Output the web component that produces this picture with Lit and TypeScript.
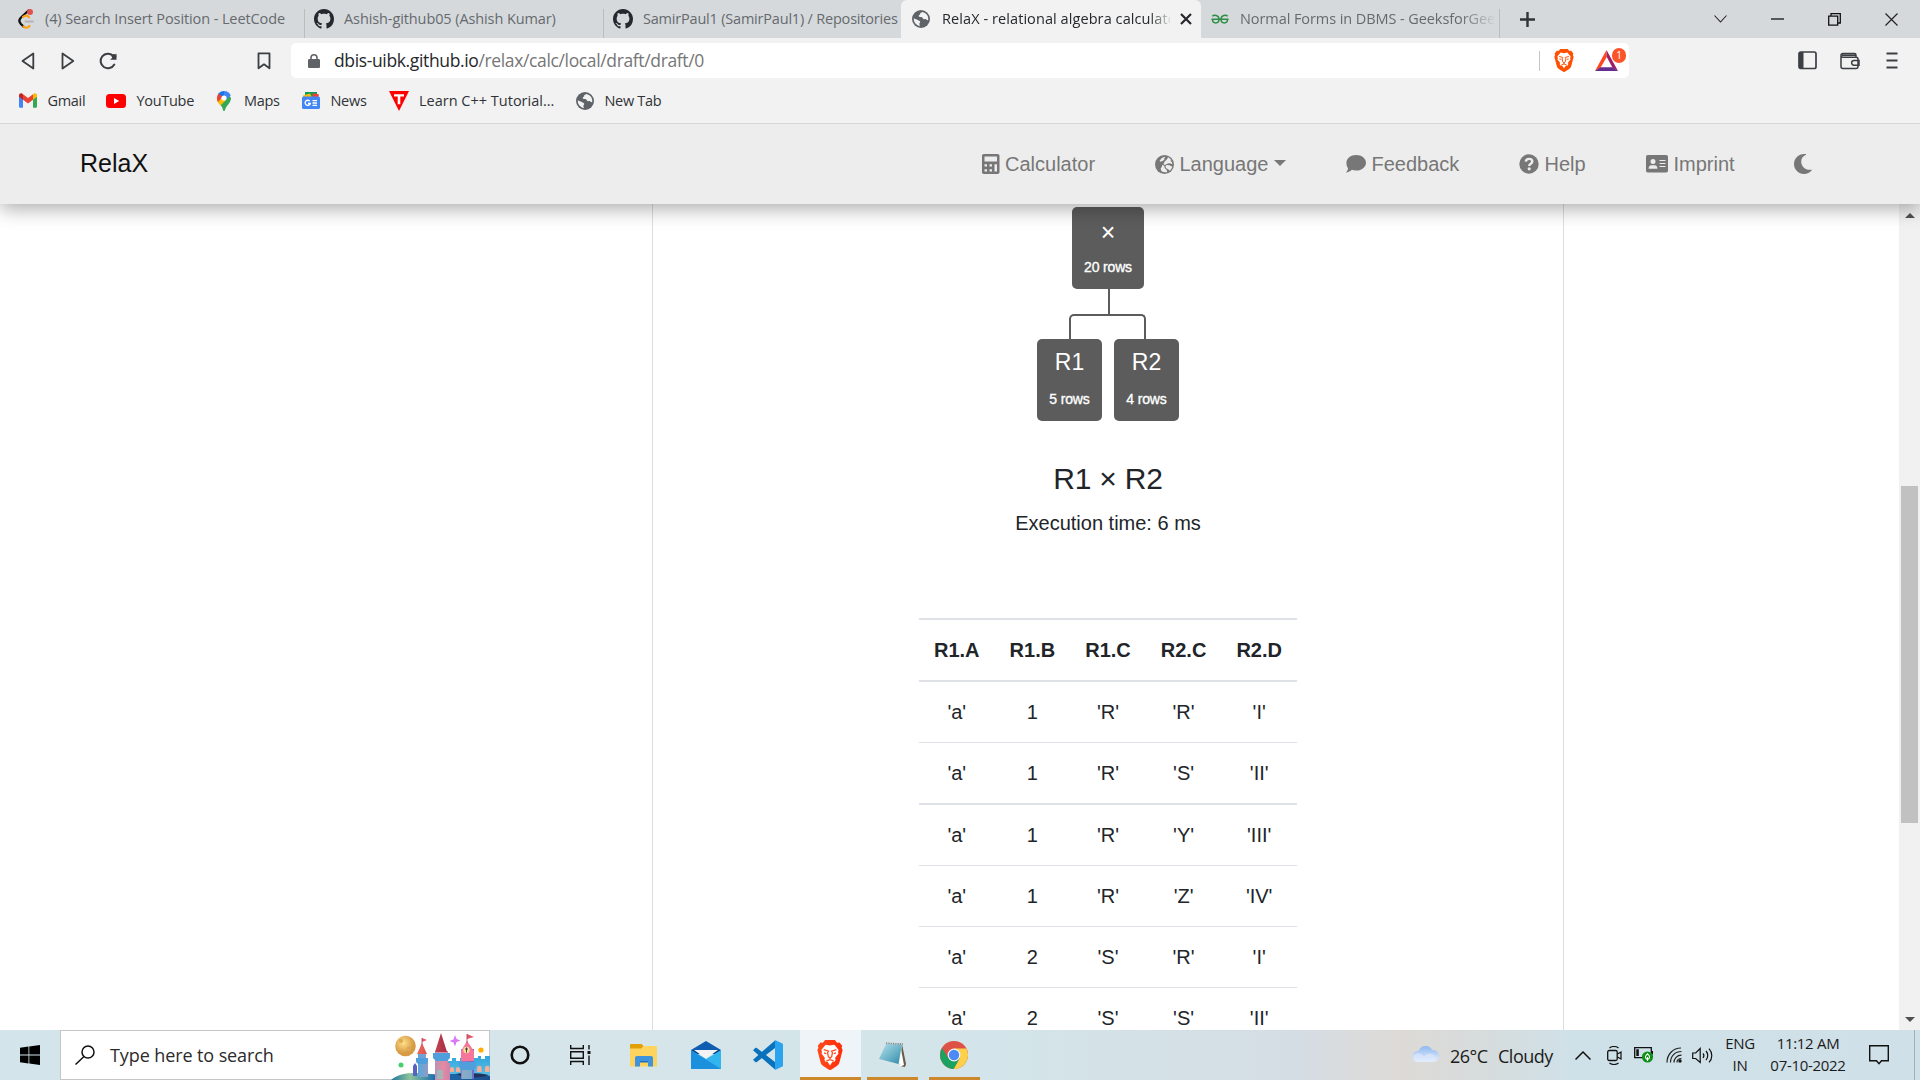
import { LitElement, html, svg, css } from "lit";
import { customElement } from "lit/decorators.js";

const icon = (w: number, h: number, box: string, body: unknown) =>
  html`<svg class="ic" width=${w} height=${h} viewBox=${box} fill="none">${body}</svg>`;

/* ---------- icon shapes ---------- */
const github = svg`<path fill="#24292f" fill-rule="evenodd" d="M8 0C3.58 0 0 3.58 0 8c0 3.54 2.29 6.53 5.47 7.59.4.07.55-.17.55-.38 0-.19-.01-.82-.01-1.49-2.01.37-2.53-.49-2.69-.94-.09-.23-.48-.94-.82-1.13-.28-.15-.68-.52-.01-.53.63-.01 1.08.58 1.23.82.72 1.21 1.87.87 2.33.66.07-.52.28-.87.51-1.07-1.78-.2-3.64-.89-3.64-3.95 0-.87.31-1.59.82-2.15-.08-.2-.36-1.02.08-2.12 0 0 .67-.21 2.2.82.64-.18 1.32-.27 2-.27s1.36.09 2 .27c1.53-1.04 2.2-.82 2.2-.82.44 1.1.16 1.92.08 2.12.51.56.82 1.27.82 2.15 0 3.07-1.87 3.75-3.65 3.95.29.25.54.73.54 1.48 0 1.07-.01 1.93-.01 2.2 0 .21.15.46.55.38A8.01 8.01 0 0 0 16 8c0-4.42-3.58-8-8-8z"/>`;
const globe = svg`<circle cx="9" cy="9" r="9" fill="#5f6368"/><path fill="#f2f2f2" d="M10.4 1.900c-.9.7-2.400.5-2.200 1.900.2 1.200-1.400 1-1.500 2-.1 1 1.200 1.300 2.500 1.200 1.500 0 1.200 1.300 2.200 1.900 1.100.6 1.800-.2 2.600.3 1 .7 1.500 1.200 2.300.9A7.300 7.300 0 0 0 10.400 1.900zM1.800 8.200c1.200 1 2.900.9 3.900 1.700 1 .8 2.300.7 2.500 1.900.1 1-.9 1.200-.8 2.200 0 .9.600 1.500.3 2.200A7.300 7.300 0 0 1 1.800 8.200z"/>`;
const leet = svg`<path d="M11.500 1.500 4 8.500c-1.800 1.800-2 4.300-.3 6.200l3 3" stroke="#111" stroke-width="2.300" stroke-linecap="round"/><path d="M6 8c2-1.800 4-1.800 6 .3M6.500 17.500c1.800 1.800 4.300 1.500 6-.5" stroke="#ffa116" stroke-width="2.200" stroke-linecap="round"/><path d="M8.500 12.500H16" stroke="#b3b3b3" stroke-width="2" stroke-linecap="round"/><circle cx="13" cy="3" r="3" fill="#e0524d"/>`;
const gfg = svg`<g stroke="#2f8d46" stroke-width="1.500"><path d="M1.300 2.300C3 .5 8 .8 8 5.300M.5 5.300H17.500M16.700 2.300C15 .5 10 .8 10 5.300"/><path d="M8 5.300c0 4.800-6.500 4.800-6.500 0M10 5.300c0 4.800 6.500 4.800 6.500 0"/></g>`;
const gmail = svg`<path fill="#4285f4" d="M0 3v10.500c0 .8.500 1.200 1.200 1.200H4V6z"/><path fill="#34a853" d="M14 14.700h2.800c.7 0 1.200-.4 1.200-1.200V3l-4 3z"/><path fill="#fbbc04" d="M14 1.500v5.300l4-3V2.500C18 .6 16-.3 14.600.8z"/><path fill="#c5221f" d="M0 2.500v1.300l4 3V1.500L3.400.8C2-.3 0 .6 0 2.500z"/><path fill="#ea4335" d="M4 1.300 9 5l5-3.700v5.500l-5 3.700-5-3.700z"/>`;
const youtube = svg`<rect width="20" height="14" rx="3.500" fill="#f00"/><path fill="#fff" d="m8 4 5.200 3L8 10z"/>`;
const maps = svg`<path fill="#34a853" d="M1 11c2 3 4.500 4 5 8.200.2 1 1.800 1 2 0C8.600 15 14 12 14 7L11 3z"/><path fill="#4285f4" d="M7 0c2.800 0 5.400 1.500 6.500 4.300L6 11 3 8z"/><path fill="#fbbc04" d="m8.500 9.500-5 5C2 12.700.4 11 0 8.500l4-4z"/><path fill="#1a73e8" d="M7 0v4.500L3.500 8 1.200 3C2.500 1 4.500 0 7 0z"/><path fill="#ea4335" d="M1.500 2.600 5.400 5.800 1 11C-.500 8.500-.3 5 1.500 2.600z"/><path fill="#4285f4" d="M9 .4c2.300.7 4 2.200 4.600 4L10 8z"/><circle cx="7" cy="7" r="2.600" fill="#fff"/>`;
const news = svg`<path fill="#0c9d58" d="M3 0h12v5H3z"/><path fill="#ea4335" d="m11 1 6 1.500-1 4-6-1z"/><path fill="#fbbc04" d="M1 3.500 8 1.500l2 4H1z"/><rect y="4.500" width="18" height="12.500" rx="1.500" fill="#4285f4"/><path d="M7.800 9.200a2.600 2.600 0 1 0 .5 2.300H6M10.500 8.700H15M10.500 11H15M10.500 13.300H15" stroke="#fff" stroke-width="1.300"/>`;
const triT = svg`<path fill="#f00" d="M0 0h20L10 20z"/><path fill="#fff" d="M5 3.200h10v2.400h-3.700v7.700H8.700V5.600H5z"/>`;

const back = svg`<path d="M12.300 1.500v15L1.500 9z" stroke="#3b3e43" stroke-width="1.800" stroke-linejoin="round"/>`;
const fwd = svg`<path d="M1.500 1.500v15L12.300 9z" stroke="#3b3e43" stroke-width="1.800" stroke-linejoin="round"/>`;
const reload = svg`<path d="M15.300 12.500A7.300 7.300 0 1 1 14 3.700" stroke="#3b3e43" stroke-width="2" stroke-linecap="round"/><path fill="#3b3e43" d="M17.500 1.500v6.300h-6.300z"/><circle cx="15" cy="4.300" r="2.300" fill="#3b3e43"/>`;
const bookmark = svg`<path d="M1.500 1.300h11v15L7 12.300l-5.500 4z" stroke="#3b3e43" stroke-width="1.800" stroke-linejoin="round"/>`;
const lock = svg`<path fill="#5f6368" d="M1.300 5H10.700c.7 0 1.300.6 1.300 1.300v6.400c0 .7-.6 1.300-1.300 1.300H1.300C.6 14 0 13.400 0 12.700V6.300C0 5.600.6 5 1.300 5z"/><path d="M3 5.500V3.800a3 3 0 0 1 6 0v1.700" stroke="#5f6368" stroke-width="1.600"/>`;
const lion = (a: string, b: string) => svg`
  <defs><linearGradient id="lg" x1="0" x2="1"><stop offset="0" stop-color=${a}/><stop offset="1" stop-color=${b}/></linearGradient></defs>
  <path fill="url(#lg)" d="m18.700 2.500 2.300-.2 2.600 3.200-.6 1.800 1 2.300-3 11.500c-.4 1.500-1 2.400-2.200 3.300L13.500 28c-1 .7-1.900.7-2.900 0l-5.400-3.600C4 23.500 3.400 22.600 3 21.100L0 9.600l1-2.300-.6-1.800L3 2.300l2.300.2L7.300 0h9.400z"/>
  <path fill="#fff" d="m12 5.200 4.200-.8 4 5-.6 2 .5 1.500-3.300 4.200.6 1.600-1.200 2-2 .2L12 24.300 9.800 20.900l-2-.2-1.200-2 .6-1.600-3.300-4.200.5-1.500-.6-2 4-5z"/>
  <path stroke=${a} stroke-width="1.200" d="m6 9.200 4.500 1.300-.8 1.700.7 3.600L12 17.300l1.600-1.500.7-3.600-.8-1.700L18 9.200M6.300 12.300l2.200.6M17.700 12.300l-2.200.6M12 17v1.800M8.500 20l3.500-1.500 3.500 1.500"/>`;
const bat = svg`<path fill="#ff4724" d="M11.500 0 0 21l5.500-3.200L11.800 7z"/><path fill="#9e1f63" d="M11.500 0 23 21l-5.500-3.200L11.800 7z"/><path fill="#662d91" d="m0 21 5.500-3.700h12L23 21z"/>`;
const sidebar = svg`<rect x="1" y="1" width="17" height="16.500" rx="1.800" stroke="#3b3e43" stroke-width="1.700"/><path fill="#3b3e43" d="M1 1h4.500v16.500H1z"/>`;
const wallet = svg`<path d="M1 3.500C1 2 2 1.500 3 1.500h11.500c1 0 1.500.7 1.500 1.700V5M1 3.500C1 5 2 5.200 3 5.200h13c1.300 0 2 .6 2 1.800v7.500c0 1.200-.8 2-2 2H3c-1.300 0-2-.8-2-2zM2 3.200h14M19 8.500h-5a2.300 2.300 0 0 0 0 4.700h5z" stroke="#3b3e43" stroke-width="1.500"/>`;
const burger = svg`<path d="M.5 1.500h11M.5 8.500h11M.5 15.500h11" stroke="#3b3e43" stroke-width="1.900"/>`;
const plus = svg`<path d="M7.500 0v15M0 7.500h15" stroke="#303338" stroke-width="2.400"/>`;
const cross = svg`<path d="m1 1 10 10M11 1 1 11" stroke="#26282b" stroke-width="2.200"/>`;

const calculator = svg`<path fill="#777" fill-rule="evenodd" d="M1.700 0h14C16.600 0 17.500.8 17.500 1.700v16.600c0 .9-.9 1.700-1.800 1.700h-14C.8 20 0 19.200 0 18.300V1.700C0 .8.8 0 1.700 0zM2.500 2.500v5H15v-5zM2.500 10.200v2.300H5v-2.300zm5 0v2.300H10v-2.300zm5 0v7.300H15v-7.300zM2.500 15.200v2.300H5v-2.300zm5 0v2.300H10v-2.300z"/>`;
const world = svg`<circle cx="9.500" cy="9.500" r="9.500" fill="#777"/><path fill="#ededed" d="M6.500 3.200 9.500 1.700l.8.800-1.500 1.200.8.900-1.600 1.200-2.500 1-1-.8zM9.500 6.800 12 4.200l1-2c1.500.7 2.800 1.900 3.500 3.300l-1.300.2 1.800 1.600.4 2-2.400-1-2.200.2-3 1.500-1.300-.9zM11.500 10l3.200.2 2.600 1.500c-.5 1.700-1.400 3-2.700 4.100l-1.400-1.500-2-1-.8-1.800zM7.500 9.800l1.700 1 .6 2.500 2 1.700.4 2c-2 .5-4 .2-5.700-.7l-.9-2.500 1.200-2z"/>`;
const bubble = svg`<path fill="#777" d="M10.200 0C15.700 0 20 3.500 20 7.800s-4.300 7.800-9.800 7.800c-1.600 0-3-.3-4.300-.8C4.500 15.900 2.500 17.500 0 17.500c1-1 2-2.500 2-4.200C.9 11.900.4 10 .4 7.800.4 3.500 4.700 0 10.200 0z"/>`;
const help = svg`<circle cx="10" cy="10" r="9.700" fill="#777"/><path d="M6.800 7.600C7 5.700 8.300 4.900 10 4.900c1.900 0 3.300 1 3.300 2.600 0 2.200-3.100 2.300-3.100 4.400" stroke="#ededed" stroke-width="2.400"/><circle cx="10.200" cy="14.800" r="1.600" fill="#ededed"/>`;
const card = svg`<rect width="22" height="17.500" rx="1.800" fill="#777"/><circle cx="7" cy="6.600" r="2.500" fill="#ededed"/><path fill="#ededed" d="M2.600 13.800c0-2.200 1-3.600 2.600-3.600h3.600c1.600 0 2.600 1.400 2.600 3.600z"/><path d="M13.500 5.500h6M13.500 8.500h6M13.500 11.500h6" stroke="#ededed" stroke-width="1.200"/>`;
const moon = svg`<path fill="#777" d="M10 0C4.400 0 0 4.500 0 10s4.400 10 10 10c3.200 0 6-1.400 7.800-3.700.3-.3 0-.7-.4-.6C12 16.700 7.200 12.700 7.200 7.500 7.200 4.600 8.800 2.200 11.900.7c.3-.2.3-.5-.1-.6Q11 0 10 0z"/>`;

const windows = svg`<path fill="#000" d="M0 2.800 8.500 1.600V9.600H0zM9.300 1.500 20 0v9.600H9.300zM0 10.400h8.500v8L0 17.200zM9.300 10.400H20V20L9.300 18.500z"/>`;
const search = svg`<circle cx="13" cy="7" r="6" stroke="#111" stroke-width="1.500"/><path d="m9 11.500-8.500 8" stroke="#111" stroke-width="1.500"/>`;
const castle = svg`
  <defs>
    <linearGradient id="tw" x1="0" x2="1"><stop offset="0" stop-color="#58a8dc"/><stop offset=".45" stop-color="#e58aa0"/><stop offset="1" stop-color="#6d6bd0"/></linearGradient>
    <linearGradient id="rf" x1="0" x2="1"><stop offset="0" stop-color="#f0685a"/><stop offset="1" stop-color="#a52d46"/></linearGradient>
    <linearGradient id="hl" x1="0" x2="1"><stop offset="0" stop-color="#176f9c"/><stop offset=".2" stop-color="#8cc49a"/><stop offset=".45" stop-color="#1b6fb0"/><stop offset="1" stop-color="#1f4f8c"/></linearGradient>
    <radialGradient id="mn" cx=".4" cy=".35"><stop offset="0" stop-color="#ffe08a"/><stop offset="1" stop-color="#d79a45"/></radialGradient>
    <linearGradient id="wl" x1="0" y1="0" x2="0" y2="1"><stop offset="0" stop-color="#31a5dd"/><stop offset="1" stop-color="#67c7e8"/></linearGradient>
  </defs>
  <circle cx="15.500" cy="14" r="10.300" fill="url(#mn)"/><circle cx="11" cy="9" r="2" fill="#dca850"/><circle cx="19" cy="17" r="2.300" fill="#dca850"/><circle cx="12" cy="19" r="1.500" fill="#dca850"/>
  <circle cx="11" cy="33" r="2.500" fill="#46d06c"/><circle cx="91" cy="18" r="2.600" fill="#ffae00"/>
  <path fill="#d977f5" d="m65 3 1.500 4 4 1.500-4 1.500-1.500 4.500-1.500-4-4-1.500 4-1.500z"/>
  <path fill="url(#wl)" d="M58 29h4v-3h4v3h4v-3h18v-2h3v3h4v-3h5v25H58z"/>
  <path fill="#f5ae98" d="M60 40v-3a2 2 0 0 1 4 0v3zM66 40v-3a2 2 0 0 1 4 0v3zM87 40v-4a2.300 2.300 0 0 1 4.600 0v4zM95 40v-4a2.300 2.300 0 0 1 4.600 0v4z"/>
  <path fill="url(#hl)" d="M0 49c8-8 22-9 40-7 20 1 40-2 60 2v5z"/>
  <path fill="#20325e" d="M66 42c10-2 25-1 33 1-8 3-22 4-33-1z"/>
  <path fill="#5a62c0" d="M23 34l2-3 2 3v10h-4z"/>
  <path fill="url(#tw)" d="M28 21h8v7h2v17H28zM45 19h13v12h2v17H45zM71 17h13v30H71z"/>
  <path fill="#4f9fdc" d="M26 26h12v4l-2 2h-8l-2-2zM43 21h17v5l-3 3H46l-3-3zM69 30h17v5l-3 3H72l-3-3z"/>
  <path fill="url(#rf)" d="m32 11 5 11H27zM51 1l6 19H45z"/><path fill="#f6759a" d="m77 9 7 10v10H71V19z"/><path fill="#e5586b" d="m32 6 5 2-5 2zM77 2l7 3-7 2z"/><path stroke="#b33a4c" stroke-width=".8" d="M32 6v7M77 2v9"/>
  <circle cx="76.500" cy="18" r="3.200" fill="#f5e0a0"/><path stroke="#333" stroke-width=".9" d="M76.500 15.500v5M75 17h3"/>
  <path fill="#7fd0c8" opacity=".6" d="M72 38h10v9H72zM47 38h6v9h-6z"/>`;
const taskview = svg`<path d="M.7 0v3.500h12.600V0M.7 20v-3.500h12.600V20M.7 6.700h12.600v6.600H.7zM19 0v4.500M19 10.500V20" stroke="#111" stroke-width="1.400"/><path fill="#111" d="M17.500 6h3v3h-3z"/>`;
const explorer = svg`<path fill="#e2a008" d="M0 1c0-.6.500-1 1-1h10.500L13.500 2 11.500 5H0z"/><path fill="#ffd45e" d="M0 4.500h11.500L13.500 2H26c.7 0 1 .4 1 1v19.500H0z"/><path fill="#3f93dc" d="M5 22.500V14c0-1.200.8-2 2-2h14c1.200 0 2 .8 2 2v8.500h-5V17H10v5.500z"/><path fill="#1f6fc0" d="M10 17h8v1.500h-8z"/>`;
const mail = svg`<path fill="#0f5cb0" d="M0 9 15 0l15 9z"/><path fill="#0a3a82" d="M0 9h30l-3 4H3z"/><path fill="#31b5ee" d="M0 9v19h30V9L15 18z"/><path fill="#1486d8" d="M0 9v19h30z" opacity=".75"/><path fill="#f3f3f3" d="M3 9h24l-12 8.500z"/>`;
const vscode = svg`<path fill="#0a71bc" d="M0 10.300 2.300 8c.5-.4 1-.4 1.500 0L22 22v7.500z" /><path fill="#0a71bc" d="M0 19.700 2.300 22c.5.4 1 .4 1.500 0L22 8V.5z"/><path fill="#2ba4ef" d="M22 0v30l7-3.200c.6-.3 1-.8 1-1.500V4.700c0-.7-.4-1.200-1-1.500z"/>`;
const notepad = svg`<path fill="#6b5a45" d="m23 2 4 20-1 3-5-1z"/><path fill="#fff" d="m21 2 4 21-5 2z"/><path fill="#d8e6ea" d="m0 19 20 6 2-3L3 17z"/><defs><linearGradient id="np" x1="0" y1="0" x2="1" y2="1"><stop offset="0" stop-color="#b5e2ee"/><stop offset="1" stop-color="#2e8ba8"/></linearGradient></defs><path fill="url(#np)" d="M7 2 23 2.500 19.500 22 0 17z"/><path d="m7 1.300 17 .7" stroke="#888" stroke-width="1.600" stroke-dasharray="1.300 1"/>`;
const chrome = svg`<circle cx="14" cy="14" r="14" fill="#de5246"/><path fill="#fdd04c" d="M14 7.500h12.400A14 14 0 0 1 13.500 28L19.500 17.500z"/><path fill="#1aa260" d="M13.700 28A14 14 0 0 1 2 7l6.500 10.500L19.500 17.500z"/><circle cx="14" cy="14" r="6.400" fill="#f4f4f4"/><circle cx="14" cy="14" r="5.200" fill="#4c8bf5"/>`;
const cloud = svg`<defs><linearGradient id="cl" x1="0" y1="0" x2="0" y2="1"><stop offset="0" stop-color="#8db8f0"/><stop offset="1" stop-color="#e6effc"/></linearGradient></defs><path fill="url(#cl)" d="M6 17a5.500 5.500 0 0 1 0-11h.5a7.500 7.500 0 0 1 13.800-1 6 6 0 0 1 1.700 12z"/><path fill="#dfeafb" opacity=".6" d="M6 17a4.500 4.500 0 1 1 2-8.500c2 1 3 2 4 3.500 2-4 6-4 8-3 4 1 5 6 2 8z"/>`;
const camera = svg`<rect x=".7" y="4.500" width="9.500" height="10" rx="1.500" stroke="#111" stroke-width="1.300"/><path d="M10.500 8 14 6v7l-3.500-2M2.500 2C5 0 9 0 11.500 2M2.500 17c2.500 2 6.500 2 9 0" stroke="#111" stroke-width="1.200"/>`;
const battery = svg`<path d="M.7.700h16.600v10H.7z" stroke="#111" stroke-width="1.300"/><path fill="#111" d="M2.300 2.300h2.500v6.800H2.300zM17.500 4H19v3.500h-1.500z"/><circle cx="13.500" cy="10" r="5.600" fill="#0f9018"/><path d="M13.500 14v-4M13.500 12.500c-2-.5-2.500-2.500-1.500-4l1.500-1.700 1.500 1.700c1 1.500.5 3.500-1.500 4z" stroke="#fff" stroke-width="1.100"/>`;
const wifi = svg`<path d="M1 15.500C1 7.500 7 1 15 1M4.500 15.500C4.500 9 9 4.500 15.500 4.500M8 15.500c0-4 3-7.300 7.500-7.300M11 15.500c0-2.500 1.700-4 4.500-4" stroke="#222" stroke-width="1.200"/><circle cx="14" cy="14" r="1.700" fill="#111"/>`;
const speaker = svg`<path d="M.7 6v5.500h3l4.500 4V1.500L3.700 6zM11 6.500c1 1.200 1 3.200 0 4.500M14 4c2.300 2.500 2.300 6.500 0 9M17 1.700c3.700 4 3.700 10 0 13.700" stroke="#111" stroke-width="1.200"/>`;
const notice = svg`<path d="M.7.700h18.600v15H12.500L10 18.700l-2.500-3H.7z" stroke="#111" stroke-width="1.400"/>`;

@customElement("browser-chrome")
class BrowserChrome extends LitElement {
  static styles = css`
    :host { display: block; height: 123px; background: #f2f2f2; border-bottom: 1px solid #d6d6d6; font: 15px "Open Sans", "Noto Sans", sans-serif; color: #303236; }
    .ic { display: block; flex: none; }
    .strip { display: flex; height: 38px; background: #d5d9dc; }
    .tab { box-sizing: border-box; display: flex; align-items: center; flex: none; height: 38px; padding-left: 9px; color: #666a6e; font-size: 14.5px; }
    .tab .ic { margin-right: 10px; }
    .tab-label { flex: 1; overflow: hidden; white-space: nowrap; line-height: 20px; }
    .t1 { width: 305px; padding-left: 17px; } .t1 .ic { margin-right: 11px; } .t1 .tab-label { letter-spacing: -.1px; }
    .t2 { width: 299px; } .t2 .tab-label { letter-spacing: -.1px; }
    .t3 { width: 297px; padding-right: 0; } .t3 .tab-label { letter-spacing: -.2px; }
    .t4 { width: 300px; padding-left: 11px; padding-right: 9px; background: #f2f2f2; border-radius: 6px 6px 0 0; color: #26282b; }
    .t4 .ic { margin-right: 12px; } .t4 .tab-label { letter-spacing: .08px; margin-right: 10px; mask-image: linear-gradient(90deg, #000 91%, transparent 101%); }
    .t4 .close { margin: 0; }
    .t5 { width: 299px; padding-left: 10px; padding-right: 6px; } .t5 .ic { margin-right: 11px; } .t5 .tab-label { letter-spacing: -.08px; mask-image: linear-gradient(90deg, #000 87%, transparent 101%); }
    .sep { flex: none; width: 1px; height: 29px; margin-left: -1px; align-self: flex-end; background: #b9bdc1; }
    .new { display: flex; align-items: center; margin-left: 20px; }
    .win { display: grid; grid-template-columns: repeat(4, 57px); width: 228px; margin-left: auto; place-items: center; }
    .bar { display: flex; align-items: center; height: 45px; padding: 0 21px; }
    .nav { display: grid; grid-template-columns: 40px 38px 158px 34px; align-items: center; height: 44px; }
    .url { box-sizing: border-box; display: flex; align-items: center; width: 1338px; height: 35px; padding: 0 3px 0 17px; background: #fff; border-radius: 5px; }
    .addr { flex: 1; margin: -2px 0 0 14px; font-size: 17.5px; letter-spacing: -.36px; color: #767676; white-space: nowrap; }
    .addr b { font-weight: 400; color: #26282b; }
    .rule { width: 1px; height: 20px; margin-right: 14px; background: #c3c6c9; }
    .rewards { display: flex; position: relative; width: 31px; margin-left: 21px; }
    .badge { position: absolute; right: 0; top: -2px; width: 14px; height: 15px; border-radius: 7px; background: #fb542b; color: #fff; font-size: 10px; line-height: 15px; text-align: center; }
    .tools { display: grid; grid-template-columns: 42px 46px 13px; align-items: center; margin-left: auto; }
    .marks { display: grid; grid-template-columns: 87px 111px 85px 87px 187px 100px; height: 35px; padding-left: 19px; align-items: center; font-size: 14.5px; }
    .mark { display: flex; align-items: center; white-space: nowrap; letter-spacing: -.3px; }
    .mark .ic { margin-right: 10.5px; }
    .mark:nth-child(3) .ic { margin-right: 13px; }
    .mark:nth-child(5) { letter-spacing: 0; } .mark:nth-child(5) .ic { margin-right: 10px; }
  `;
  render() {
    const marks = [
      [icon(18, 15, "0 0 18 15", gmail), "Gmail"],
      [icon(20, 14, "0 0 20 14", youtube), "YouTube"],
      [icon(14, 20, "0 0 14 20", maps), "Maps"],
      [icon(18, 17, "0 0 18 17", news), "News"],
      [icon(20, 20, "0 0 20 20", triT), "Learn C++ Tutorial..."],
      [icon(18, 18, "0 0 18 18", globe), "New Tab"],
    ];
    return html`
      <div class="strip">
        <div class="tab t1">${icon(17, 20, "0 0 17 20", leet)}<span class="tab-label">(4) Search Insert Position - LeetCode</span></div><i class="sep"></i>
        <div class="tab t2">${icon(20, 20, "0 0 16 16", github)}<span class="tab-label">Ashish-github05 (Ashish Kumar)</span></div><i class="sep"></i>
        <div class="tab t3">${icon(20, 20, "0 0 16 16", github)}<span class="tab-label">SamirPaul1 (SamirPaul1) / Repositories</span></div>
        <div class="tab t4">${icon(18, 18, "0 0 18 18", globe)}<span class="tab-label">RelaX - relational algebra calculator</span><svg class="ic close" width="12" height="12" viewBox="0 0 12 12" fill="none">${cross}</svg></div>
        <div class="tab t5">${icon(18, 10, "0 0 18 10", gfg)}<span class="tab-label">Normal Forms in DBMS - GeeksforGeeks</span></div><i class="sep"></i>
        <div class="new">${icon(15, 15, "0 0 15 15", plus)}</div>
        <div class="win">
          ${icon(13, 8, "0 0 13 8", svg`<path d="m.5.500 6 6.500 6-6.500" stroke="#222" stroke-width="1.100"/>`)}
          ${icon(13, 2, "0 0 13 2", svg`<path d="M0 1h13" stroke="#111" stroke-width="1.300"/>`)}
          ${icon(13, 13, "0 0 13 13", svg`<path d="M.7 3.200h9v9h-9zM3 3V.700h9.300V10H10" stroke="#111" stroke-width="1.300"/>`)}
          ${icon(13, 13, "0 0 13 13", svg`<path d="m.5.500 12 12M12.500.500l-12 12" stroke="#222" stroke-width="1.200"/>`)}
        </div>
      </div>
      <div class="bar">
        <div class="nav">
          ${icon(14, 18, "0 0 14 18", back)}${icon(14, 18, "0 0 14 18", fwd)}${icon(18, 18, "0 0 18 18", reload)}${icon(14, 18, "0 0 14 18", bookmark)}
        </div>
        <div class="url">
          ${icon(12, 14, "0 0 12 14", lock)}
          <span class="addr"><b>dbis-uibk.github.io</b>/relax/calc/local/draft/draft/0</span>
          <i class="rule"></i>
          ${icon(20, 23, "0 0 24 28.500", lion("#ff4f00", "#ff4f00"))}
          <span class="rewards">${icon(23, 21, "0 0 23 21", bat)}<span class="badge">1</span></span>
        </div>
        <div class="tools">
          ${icon(19, 19, "0 0 19 19", sidebar)}${icon(20, 18, "0 0 20 18", wallet)}${icon(12, 17, "0 0 12 17", burger)}
        </div>
      </div>
      <div class="marks">${marks.map(([i, t]) => html`<span class="mark">${i}${t}</span>`)}</div>
    `;
  }
}

@customElement("relax-page")
class RelaxPage extends LitElement {
  static styles = css`
    :host { display: flex; flex-direction: column; height: 906px; overflow: hidden; background: #fff; font: 20px/30px "Liberation Sans", Arial, sans-serif; color: #212529; }
    .ic { display: block; flex: none; }
    .head { position: relative; z-index: 1; box-sizing: border-box; display: flex; align-items: center; flex: none; height: 80px; padding-left: 80px; background: #ededed; box-shadow: 0 5px 18px rgba(0, 0, 0, .32); color: #777; }
    .brand { width: 902px; margin-top: -2px; font-size: 25px; color: #111; }
    .links { display: grid; grid-template-columns: 173px 191px 173px 127px 148px 20px; align-items: center; }
    .link { display: flex; align-items: center; gap: 5.5px; }
    .caret { width: 0; border: 6px solid transparent; border-top-color: #777; border-bottom: 0; margin-top: -2px; }
    .body { display: flex; flex: 1; min-height: 0; }
    .side { width: 652px; border-right: 1px solid #ddd; }
    .main { display: flex; flex-direction: column; align-items: center; width: 910px; padding-top: 3px; border-right: 1px solid #ddd; overflow: hidden; }
    .node { box-sizing: border-box; height: 82px; padding-top: 9px; border-radius: 5px; background: #5c5c5c; color: #fff; text-align: center; font-size: 23px; line-height: 28px; }
    .rows { display: block; margin-top: 13px; font-size: 14px; line-height: 20px; letter-spacing: -.15px; -webkit-text-stroke: .35px #fff; }
    .root { width: 72px; flex: none; padding-top: 11px; font-size: 25px; }
    .root .rows { margin-top: 11px; }
    .stem { flex: none; width: 2px; height: 25px; margin-left: 1px; background: #5c5c5c; }
    .fork { box-sizing: border-box; flex: none; width: 77px; height: 25px; margin-right: 2px; border: 2px solid #5c5c5c; border-bottom: 0; border-radius: 5px 5px 0 0; }
    .kids { display: flex; flex: none; gap: 12px; }
    .kids .node { width: 65px; }
    .expr { margin: 40px 0 11px; font-size: 30px; line-height: 36px; font-weight: 400; letter-spacing: -.2px; }
    .time { margin: 0 0 80px; }
    .table { flex: none; width: 378px; border-top: 2px solid #dee2e6; }
    .row { display: grid; grid-template-columns: repeat(5, 1fr); padding: 15px 0; text-align: center; border-bottom: 1px solid #dee2e6; }
    .row.thick { border-bottom-width: 2px; }
    .row.th { font-weight: 700; }
    .scroll { display: flex; flex-direction: column; align-items: center; width: 21px; margin-left: auto; padding: 9px 0 8px; box-sizing: border-box; background: #f1f1f1; }
    .thumb { width: 17px; height: 337px; margin: 268px 0 auto; background: #c1c1c1; }
  `;
  render() {
    const rows = [
      ["R1.A", "R1.B", "R1.C", "R2.C", "R2.D"],
      ["'a'", "1", "'R'", "'R'", "'I'"],
      ["'a'", "1", "'R'", "'S'", "'II'"],
      ["'a'", "1", "'R'", "'Y'", "'III'"],
      ["'a'", "1", "'R'", "'Z'", "'IV'"],
      ["'a'", "2", "'S'", "'R'", "'I'"],
      ["'a'", "2", "'S'", "'S'", "'II'"],
    ];
    return html`
      <div class="head">
        <span class="brand">RelaX</span>
        <div class="links">
          <span class="link">${icon(17.5, 20, "0 0 17.5 20", calculator)}Calculator</span>
          <span class="link">${icon(19, 19, "0 0 19 19", world)}Language<i class="caret"></i></span>
          <span class="link">${icon(20, 18, "0 0 20 18", bubble)}Feedback</span>
          <span class="link">${icon(20, 20, "0 0 20 20", help)}Help</span>
          <span class="link">${icon(22, 18, "0 0 22 18", card)}Imprint</span>
          ${icon(18, 20, "0 0 18 20", moon)}
        </div>
      </div>
      <div class="body">
        <div class="side"></div>
        <div class="main">
          <div class="node root">×<span class="rows">20 rows</span></div>
          <i class="stem"></i><i class="fork"></i>
          <div class="kids">
            <div class="node">R1<span class="rows">5 rows</span></div>
            <div class="node">R2<span class="rows">4 rows</span></div>
          </div>
          <h4 class="expr">R1 × R2</h4>
          <p class="time">Execution time: 6 ms</p>
          <div class="table">
            ${rows.map((r, i) => html`<div class="row ${i === 0 ? "th thick" : i === 2 ? "thick" : ""}">${r.map((c) => html`<span>${c}</span>`)}</div>`)}
          </div>
        </div>
        <div class="scroll">
          ${icon(10, 5, "0 0 10 5", svg`<path fill="#505050" d="M5 0l5 5H0z"/>`)}
          <i class="thumb"></i>
          ${icon(10, 5, "0 0 10 5", svg`<path fill="#505050" d="M0 0h10L5 5z"/>`)}
        </div>
      </div>
    `;
  }
}

@customElement("task-bar")
class TaskBar extends LitElement {
  static styles = css`
    :host { display: flex; height: 50px; background: linear-gradient(90deg, #d3e4eb 0, #d6e5ea 540px, #d3e5ea 1000px, #d5dde4 1300px, #dddad6 1400px, #d6dcdd 1490px, #cfe1e8 1570px, #d0e0e8 100%); font: 18px "Open Sans", "Noto Sans", sans-serif; color: #1b1b1b; }
    .ic { display: block; flex: none; }
    .start { display: grid; place-items: center; width: 60px; }
    .search { box-sizing: border-box; display: flex; align-items: center; width: 430px; padding-left: 14px; background: #fff; border: 1px solid #c4c6c8; }
    .search span { flex: 1; margin-left: 15px; font-size: 18px; letter-spacing: -.1px; color: #2b2b2b; }
    .search .ic:last-child { margin: 1px -1px 0 0; }
    .apps { display: grid; grid-template-columns: 60px 60px 67px 58px 65px 61px 6px 51px 11px 51px; }
    .app { display: grid; place-items: center; }
    .on { box-shadow: inset 0 -3px #cc882b; }
    .active { background: #eff4f8; padding-right: 1px; }
    .last { padding-right: 2px; }
    .tray { display: flex; align-items: center; margin-left: auto; padding-right: 5px; white-space: nowrap; }
    .weather { display: flex; align-items: center; width: 163px; letter-spacing: -.5px; font-size: 18px; }
    .weather .ic { margin: -3px 11px 0 0; }
    .weather span { padding-top: 2px; }
    .weather .temp { width: 48px; }
    .status { display: grid; grid-template-columns: 32px 27px 32px 26px 28px; align-items: center; }
    .stack { text-align: center; font-size: 15px; line-height: 22px; letter-spacing: -.3px; margin-top: -3px; }
    .lang { width: 40px; }
    .clock { width: 90px; margin-left: 3px; }
    .notice { margin: 0 25px 0 16px; }
    .peek { align-self: stretch; width: 1px; background: #9fb0b8; }
  `;
  render() {
    return html`
      <div class="start">${icon(20, 20, "0 0 20 20", windows)}</div>
      <div class="search">${icon(20, 20, "0 0 20 20", search)}<span>Type here to search</span>${icon(100, 48, "0 0 100 48", castle)}</div>
      <div class="apps">
        <div class="app">${icon(20, 20, "0 0 20 20", svg`<circle cx="10" cy="10" r="8.300" stroke="#111" stroke-width="2.600"/>`)}</div>
        <div class="app">${icon(21, 20, "0 0 21 20", taskview)}</div>
        <div class="app">${icon(27, 23, "0 0 27 23", explorer)}</div>
        <div class="app">${icon(30, 28, "0 0 30 28", mail)}</div>
        <div class="app">${icon(30, 30, "0 0 30 30", vscode)}</div>
        <div class="app active on">${icon(26, 30, "0 0 24 28.500", lion("#ff4a1c", "#ff2d0a"))}</div><i></i>
        <div class="app on">${icon(27, 26, "0 0 27 26", notepad)}</div><i></i>
        <div class="app on last">${icon(28, 28, "0 0 28 28", chrome)}</div>
      </div>
      <div class="tray">
        <div class="weather">${icon(27, 18, "0 0 27 18", cloud)}<span class="temp">26°C</span><span>Cloudy</span></div>
        <div class="status">
          ${icon(16, 9, "0 0 16 9", svg`<path d="m.5 8.500 7.500-7.500 7.500 7.500" stroke="#111" stroke-width="1.500"/>`)}
          ${icon(15, 19, "0 0 15 19", camera)}${icon(20, 16, "0 0 20 16", battery)}${icon(17, 17, "0 0 17 17", wifi)}${icon(21, 17, "0 0 21 17", speaker)}
        </div>
        <div class="stack lang">ENG<br />IN</div>
        <div class="stack clock">11:12 AM<br />07-10-2022</div>
        <div class="notice">${icon(20, 20, "0 0 20 20", notice)}</div>
        <i class="peek"></i>
      </div>
    `;
  }
}

@customElement("app-root")
class AppRoot extends LitElement {
  static styles = css`
    :host { display: block; width: 1920px; height: 1080px; overflow: hidden; background: #fff; }
  `;
  render() {
    return html`<browser-chrome></browser-chrome><relax-page></relax-page><task-bar></task-bar>`;
  }
}
